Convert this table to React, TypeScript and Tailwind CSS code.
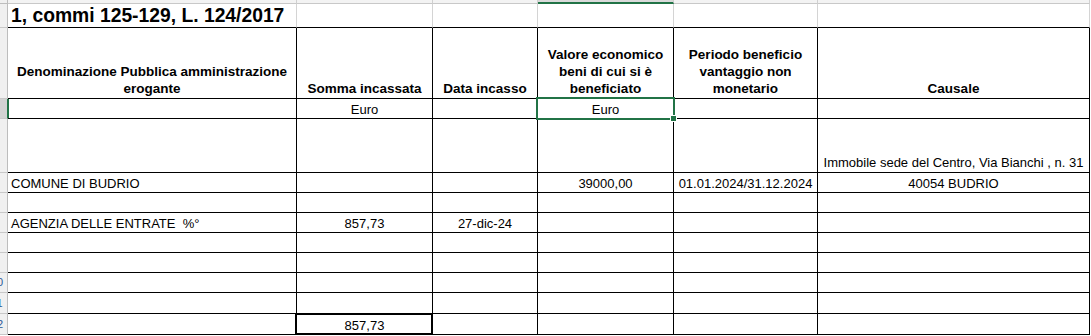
import React from 'react';

const colW = ['w-[289px]', 'w-[136px]', 'w-[105px]', 'w-[136px]', 'w-[144px]', 'w-[272px]'];

type CellDef = {
  t?: React.ReactNode;
  left?: boolean;
  cls?: string;
  sel?: boolean;
  thick?: boolean;
};

type RowDef = {
  n: number;
  h: string;
  cells: CellDef[];
  selected?: boolean;
};

// only the tail of two-digit row numbers peeks out of the narrow header strip
const RowHead = ({ n, selected }: { n?: number; selected?: boolean }) => (
  <div
    className={`w-[8px] shrink-0 overflow-hidden border-b border-r border-b-[#c8c8c8] ${
      selected ? 'bg-[#d2d2d2] border-r-[#217346] shadow-[1px_0_0_#217346]' : 'bg-[#f0f0f0] border-r-[#bdbdbd]'
    }`}
  >
    {n !== undefined && n >= 10 && (
      <div className="ml-[-16px] w-[26px] h-full flex items-center justify-center text-[11px] text-[#2b5797]">
        {n}
      </div>
    )}
  </div>
);

const Cell = ({ i, cell, base }: { i: number; cell: CellDef; base: string }) => (
  <div
    className={`relative shrink-0 border-r border-b border-black flex flex-col justify-end px-[3px] whitespace-nowrap ${colW[i]} ${
      cell.left ? 'items-start' : 'items-center text-center'
    } ${base} ${cell.cls ?? ''}`}
  >
    {cell.t}
    {cell.sel && (
      <div className="absolute -inset-[2px] border-2 border-[#217346] z-10">
        <div className="absolute -right-[4px] -bottom-[4px] w-[7px] h-[7px] bg-[#217346] border border-white" />
      </div>
    )}
    {cell.thick && <div className="absolute -left-[2px] -top-px -right-px -bottom-px border-2 border-black z-10" />}
  </div>
);

const empty: CellDef[] = [{}, {}, {}, {}, {}, {}];

const rows: RowDef[] = [
  {
    n: 3,
    h: 'h-[20px]',
    selected: true,
    cells: [{}, { t: 'Euro' }, {}, { t: 'Euro', sel: true }, {}, {}],
  },
  {
    n: 4,
    h: 'h-[54px]',
    cells: [{}, {}, {}, {}, {}, { t: 'Immobile sede del Centro, Via Bianchi , n. 31', cls: 'pb-px' }],
  },
  {
    n: 5,
    h: 'h-[20px]',
    cells: [
      { t: 'COMUNE DI BUDRIO', left: true },
      {},
      {},
      { t: '39000,00' },
      { t: '01.01.2024/31.12.2024', cls: 'text-[12.5px]' },
      { t: '40054 BUDRIO' },
    ],
  },
  { n: 6, h: 'h-[20px]', cells: empty },
  {
    n: 7,
    h: 'h-[20px]',
    cells: [
      { t: <span className="whitespace-pre">AGENZIA DELLE ENTRATE  %°</span>, left: true },
      { t: '857,73' },
      { t: '27-dic-24' },
      {},
      {},
      {},
    ],
  },
  { n: 8, h: 'h-[20px]', cells: empty },
  { n: 9, h: 'h-[20px]', cells: empty },
  { n: 10, h: 'h-[20px]', cells: empty },
  { n: 11, h: 'h-[21px]', cells: empty },
  {
    n: 12,
    h: 'h-[21px]',
    cells: [{}, { t: '857,73', thick: true }, {}, {}, {}, {}],
  },
];

export default function App() {
  return (
    <div className="w-[1091px] h-[336px] overflow-hidden bg-white text-black font-['Liberation_Sans',Arial,sans-serif]">
      {/* bottom edge of the column headers */}
      <div className="flex h-[4px]">
        <div className="w-[8px] shrink-0 bg-[#f0f0f0] border-r border-b border-[#bdbdbd]" />
        {colW.map((w, i) => (
          <div
            key={i}
            className={`shrink-0 ${w} border-r border-[#d0d0d0] ${
              i === 3 ? 'bg-[#dadada] border-b-2 border-b-[#217346]' : 'bg-[#f3f3f3] border-b border-b-[#c8c8c8]'
            }`}
          />
        ))}
      </div>

      {/* title */}
      <div className="flex h-[24px]">
        <RowHead n={1} />
        {colW.map((w, i) => (
          <div
            key={i}
            className={`shrink-0 ${w} border-b border-r border-b-black border-r-[#d4d4d4] flex flex-col justify-end whitespace-nowrap`}
          >
            {i === 0 && <div className="pl-[3px] text-[19.3px] font-bold leading-[22px]">1, commi 125-129, L. 124/2017</div>}
          </div>
        ))}
      </div>

      {/* header */}
      <div className="flex h-[71px]">
        <RowHead n={2} />
        {[
          <>Denominazione Pubblica amministrazione<br />erogante</>,
          'Somma incassata',
          'Data incasso',
          <>Valore economico<br />beni di cui si è<br />beneficiato</>,
          <>Periodo beneficio<br />vantaggio non<br />monetario</>,
          'Causale',
        ].map((t, i) => (
          <Cell key={i} i={i} cell={{ t }} base="text-[13.5px] font-bold leading-[17px] pb-px" />
        ))}
      </div>

      {rows.map((r) => (
        <div key={r.n} className={`flex ${r.h}`}>
          <RowHead n={r.n} selected={r.selected} />
          {r.cells.map((c, i) => (
            <Cell key={i} i={i} cell={c} base="text-[13px] leading-[16px]" />
          ))}
        </div>
      ))}
    </div>
  );
}
